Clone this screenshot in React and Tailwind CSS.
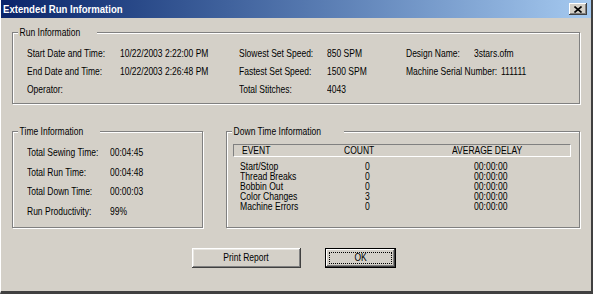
import React from "react";

const runRows = [
  [
    ["Start Date and Time:", "10/22/2003 2:22:00 PM"],
    ["Slowest Set Speed:", "850 SPM"],
    ["Design Name:", "3stars.ofm", "w-[68px]"],
  ],
  [
    ["End Date and Time:", "10/22/2003 2:26:48 PM"],
    ["Fastest Set Speed:", "1500 SPM"],
    ["Machine Serial Number:", "111111", "w-[95px]"],
  ],
  [
    ["Operator:", ""],
    ["Total Stitches:", "4043"],
    ["", "", "w-[68px]"],
  ],
];

const timeRows = [
  ["Total Sewing Time:", "00:04:45"],
  ["Total Run Time:", "00:04:48"],
  ["Total Down Time:", "00:00:03"],
  ["Run Productivity:", "99%"],
];

const downRows = [
  ["Start/Stop", "0", "00:00:00"],
  ["Thread Breaks", "0", "00:00:00"],
  ["Bobbin Out", "0", "00:00:00"],
  ["Color Changes", "3", "00:00:00"],
  ["Machine Errors", "0", "00:00:00"],
];

// the old dialog font is narrower than anything installed, so squeeze it
function Txt({ children, className = "" }) {
  return (
    <span className={`inline-block whitespace-nowrap origin-left scale-x-[0.81] ${className}`}>
      {children}
    </span>
  );
}

function GroupBox({ title, className, children }) {
  return (
    <div
      className={`relative border border-[#808080] shadow-[1px_1px_0_#fff,inset_1px_1px_0_#fff] ${className}`}
    >
      <span className="absolute -top-[7px] left-[5px] bg-[#d4d0c8] leading-[13px] flex">
        <span className="px-[2px] whitespace-nowrap origin-left scale-x-[0.81] bg-[#d4d0c8] -mr-[14%]">
          {title}
        </span>
      </span>
      {children}
    </div>
  );
}

function Button({ children, isDefault }) {
  const label = (
    <span className="inline-block whitespace-nowrap scale-x-[0.81]">{children}</span>
  );
  if (isDefault) {
    return (
      <div className="w-[71px] h-[20px] border border-black bg-[#d4d0c8] shadow-[inset_-1px_-1px_#404040,inset_1px_1px_#fff,inset_-2px_-2px_#808080] p-[3px]">
        <div className="h-full border border-dotted border-black flex items-center justify-center">
          {label}
        </div>
      </div>
    );
  }
  return (
    <div className="w-[109px] h-[20px] bg-[#d4d0c8] shadow-[inset_-1px_-1px_#404040,inset_1px_1px_#fff,inset_-2px_-2px_#808080,inset_2px_2px_#e8e6e1] flex items-center justify-center">
      {label}
    </div>
  );
}

export default function App() {
  return (
    <div
      className="w-[593px] h-[294px] bg-[#d4d0c8] text-black text-[10.5px] border-l border-l-white border-r-2 border-r-[#404040] border-b-[3px] border-b-[#404040] flex flex-col overflow-hidden"
      style={{ fontFamily: '"Liberation Sans", Arial, sans-serif' }}
    >
      {/* title bar */}
      <div className="h-[18px] shrink-0 flex items-center justify-between pl-[2px] pr-[4px] bg-gradient-to-r from-[#0a246a] to-[#a6caf0]">
        <span className="text-white font-bold text-[11px] inline-block whitespace-nowrap origin-left scale-x-[0.87]">
          Extended Run Information
        </span>
        <div className="w-[18px] h-[12px] bg-[#d4d0c8] shadow-[inset_-1px_-1px_#404040,inset_1px_1px_#fff,inset_-2px_-2px_#808080] flex items-center justify-center">
          <svg width="8" height="7" viewBox="0 0 8 7">
            <path d="M0.5 0.5 L7.5 6.5 M7.5 0.5 L0.5 6.5" stroke="black" strokeWidth="1.6" />
          </svg>
        </div>
      </div>

      <div className="flex flex-col px-[11px] pt-[14px]">
        <GroupBox title="Run Information" className="h-[72px] pt-[12px] pl-[14px]">
          {runRows.map((row, i) => (
            <div key={i} className="flex h-[18px] items-center">
              <span className="w-[93px]"><Txt>{row[0][0]}</Txt></span>
              <span className="w-[119px]"><Txt>{row[0][1]}</Txt></span>
              <span className="w-[88px]"><Txt>{row[1][0]}</Txt></span>
              <span className="w-[79px]"><Txt>{row[1][1]}</Txt></span>
              <span className={row[2][2]}><Txt>{row[2][0]}</Txt></span>
              <span><Txt>{row[2][1]}</Txt></span>
            </div>
          ))}
        </GroupBox>

        <div className="flex gap-[23px] mt-[27px]">
          <GroupBox title="Time Information" className="w-[192px] h-[97px] pt-[11px] pl-[14px]">
            {timeRows.map(([label, value]) => (
              <div key={label} className="flex h-[19.7px] items-center">
                <span className="w-[83px]"><Txt>{label}</Txt></span>
                <span><Txt>{value}</Txt></span>
              </div>
            ))}
          </GroupBox>

          <GroupBox title="Down Time Information" className="w-[357px] h-[97px] pt-[12px] pl-[6px] pr-[8px]">
            <div className="h-[13px] border border-t-[#808080] border-l-[#808080] border-b-white border-r-white grid grid-cols-[102px_108px_1fr] items-center pl-[8px] leading-none">
              <Txt>EVENT</Txt>
              <Txt>COUNT</Txt>
              <Txt>AVERAGE DELAY</Txt>
            </div>
            <div className="pt-[5px] pl-[7px] text-[10px]">
              {downRows.map(([event, count, delay]) => (
                <div key={event} className="grid grid-cols-[125px_109px_1fr] h-[10px] items-center leading-none">
                  <Txt className="scale-x-[0.86]">{event}</Txt>
                  <Txt className="scale-x-[0.86]">{count}</Txt>
                  <Txt className="scale-x-[0.86]">{delay}</Txt>
                </div>
              ))}
            </div>
          </GroupBox>
        </div>

        <div className="flex justify-center gap-[24px] mt-[20px] pr-[4px]">
          <Button>Print Report</Button>
          <Button isDefault>OK</Button>
        </div>
      </div>
    </div>
  );
}
